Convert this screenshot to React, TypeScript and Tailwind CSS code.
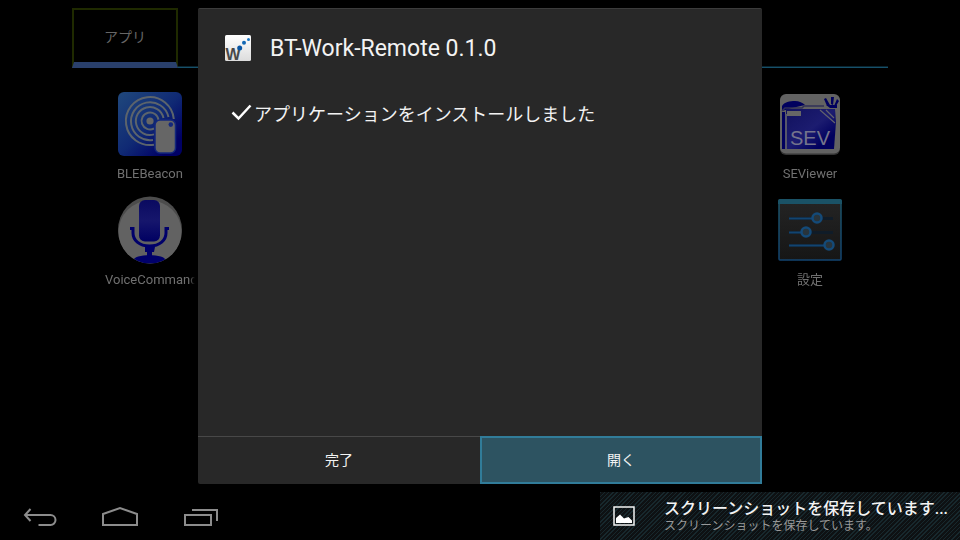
import React from 'react';

interface LauncherApp {
    label: string;
    icon: React.ReactNode;
}

const BeaconIcon = () => (
    <svg className="w-16 h-16" viewBox="0 0 64 64" fill="none" aria-hidden="true">
        <defs>
            <linearGradient id="beacon-bg" x1="0" y1="0" x2="1" y2="1">
                <stop offset="0" stopColor="#20487c" />
                <stop offset="0.5" stopColor="#102a74" />
                <stop offset="0.85" stopColor="#000064" />
            </linearGradient>
        </defs>
        <rect width="64" height="64" rx="6" fill="url(#beacon-bg)" />
        <circle cx="32" cy="29" r="3.6" fill="#666" />
        <g stroke="#5c646c" strokeWidth="2">
            <path d="M36 36.500A8.500 8.500 0 1 1 40.500 28" />
            <path d="M36 42.400A14 14 0 1 1 45.500 26" />
            <path d="M35 48A19 19 0 1 1 50.500 25" />
            <path d="M36 52.700A24 24 0 1 1 55.800 27" />
        </g>
        <rect x="37" y="28" width="20.500" height="33" rx="5" fill="#666" stroke="#14287c" strokeWidth="1.500" />
        <circle cx="52.800" cy="32.600" r="2.300" fill="#14287c" />
    </svg>
);

const MicIcon = () => (
    <svg className="w-16 h-[68px] shrink-0" viewBox="0 0 64 68" fill="none" aria-hidden="true">
        <defs>
            <clipPath id="mic-clip">
                <ellipse cx="32" cy="34" rx="32" ry="33.500" />
            </clipPath>
            <linearGradient id="mic-body" x1="0" y1="0" x2="0" y2="1">
                <stop offset="0" stopColor="#0a0a60" />
                <stop offset="0.5" stopColor="#16166c" />
                <stop offset="1" stopColor="#000062" />
            </linearGradient>
        </defs>
        <ellipse cx="32" cy="34" rx="32" ry="33.500" fill="#4c4c4c" />
        <ellipse cx="32" cy="36" rx="31.500" ry="31.500" fill="#626262" />
        <g clipPath="url(#mic-clip)">
            <rect x="21" y="4" width="21" height="41.500" rx="6" fill="url(#mic-body)" />
            <path d="M12 32.500H15V37C15 44 21 50 31.500 50S48 44 48 37V32.500H51" stroke="#00006a" strokeWidth="3" />
            <path d="M27 51H37L36 56H34V60H29V56H27Z" fill="#00006a" />
            <ellipse cx="31.500" cy="64.500" rx="16" ry="5.500" fill="#00006a" />
        </g>
    </svg>
);

const ViewerIcon = () => (
    <svg className="w-16 h-16" viewBox="0 0 64 64" fill="none" aria-hidden="true">
        <defs>
            <linearGradient id="viewer-folder" x1="0" y1="0" x2="1" y2="1">
                <stop offset="0" stopColor="#11115e" />
                <stop offset="0.5" stopColor="#1c1c70" />
                <stop offset="0.8" stopColor="#00005e" />
            </linearGradient>
        </defs>
        <rect x="2" y="3" width="60" height="60" rx="6" fill="#343434" />
        <rect x="2" y="2" width="60" height="59.500" rx="6" fill="#626262" />
        <path d="M4 14C6 10 12 9 17 9C21 9 25 11 27 13L14 16L4 19Z" fill="#00005e" />
        <path d="M4 19L7 16H24L26 14H46" stroke="#303058" strokeWidth="1.500" />
        <path d="M4 20H7V57H4Z" fill="#00005e" />
        <path d="M8 17H57L58 30L56 57H8Z" fill="url(#viewer-folder)" />
        <path d="M8 57V22" stroke="#56566a" strokeWidth="2" />
        <path d="M9 19H23V24H9Z" fill="#666" />
        <path d="M42 18L57 31M48 18L56 26" stroke="#62626c" strokeWidth="1.200" />
        <path d="M49 14L46 7L48 6L52 13ZM53 12V5H56L55 13ZM56 14L59 7L61 9L58 14ZM48 13H59V16H52Z" fill="#00005e" />
        <text x="12" y="53" fontFamily="Liberation Sans" fontSize="20" fill="#74748c">SEV</text>
    </svg>
);

const SettingsIcon = () => (
    <svg className="w-16 h-16" viewBox="0 0 64 64" fill="none" aria-hidden="true">
        <defs>
            <linearGradient id="settings-bg" x1="0" y1="0" x2="0" y2="1">
                <stop offset="0" stopColor="#242424" />
                <stop offset="1" stopColor="#161616" />
            </linearGradient>
            <linearGradient id="settings-edge" x1="0" y1="0" x2="0" y2="1">
                <stop offset="0" stopColor="#1c5468" />
                <stop offset="1" stopColor="#124470" />
            </linearGradient>
        </defs>
        <rect x="1" y="2" width="62" height="60" rx="1" fill="url(#settings-bg)" stroke="url(#settings-edge)" strokeWidth="1.500" />
        <path d="M0 3Q0 1 2 1H62Q64 1 64 3V6H0Z" fill="#1a5266" />
        <path d="M11 20.500H55M11 34.500H55M11 47.500H55" stroke="#101c28" strokeWidth="3" />
        <path d="M11 20.500H35M11 34.500H24M11 47.500H48" stroke="#124470" strokeWidth="2" />
        <g fill="#28343c" stroke="#144a78" strokeWidth="2.500">
            <circle cx="39" cy="20" r="4.500" />
            <circle cx="28" cy="34" r="4.500" />
            <circle cx="51" cy="47" r="4.500" />
        </g>
    </svg>
);

const PackageIcon = () => (
    <svg className="w-7 h-7" viewBox="0 0 28 28" aria-hidden="true">
        <defs>
            <linearGradient id="package-bg" x1="0" y1="0" x2="0" y2="1">
                <stop offset="0" stopColor="#fff" />
                <stop offset="1" stopColor="#dcdcdc" />
            </linearGradient>
        </defs>
        <rect x="1" y="0" width="26" height="26" rx="1.500" fill="url(#package-bg)" />
        <text x="1.500" y="25" fontFamily="Liberation Sans" fontWeight="700" fontSize="16" fill="#484848">W</text>
        <circle cx="15.700" cy="13" r="2.500" fill="#0a56a4" />
        <circle cx="20" cy="7.700" r="2" fill="#1468b4" />
        <circle cx="24.500" cy="4.400" r="1.500" fill="#1e78c4" />
    </svg>
);

const leftApps: LauncherApp[] = [
    { label: 'BLEBeacon', icon: <BeaconIcon /> },
    { label: 'VoiceCommand', icon: <MicIcon /> },
];

const rightApps: LauncherApp[] = [
    { label: 'SEViewer', icon: <ViewerIcon /> },
    { label: '設定', icon: <SettingsIcon /> },
];

const AppColumn = ({ apps }: { apps: LauncherApp[] }) => (
    <div className="flex flex-col gap-3.5">
        {apps.map(app => (
            <button key={app.label} type="button" className="w-[90px] flex flex-col items-center gap-2">
                <span className="h-16 flex items-center">{app.icon}</span>
                {/* long names fade out at the edge of the cell */}
                <span className="w-full h-5 leading-5 whitespace-nowrap text-[13px] text-[#707070] mask-r-from-94% mask-r-to-100%">
                    {app.label}
                </span>
            </button>
        ))}
    </div>
);

const Launcher = () => (
    <div className="pt-2">
        <div className="mx-[72px] flex border-b border-[#16506a] shadow-[inset_0_-1px_#0a2530]">
            <button type="button" className="w-[106px] h-[60px] -mb-px pt-0.5 border-2 border-b-6 border-[#1f2a00] border-b-[#2a406c] text-sm text-[#666]">
                アプリ
            </button>
        </div>
        <div className="mx-[105px] mt-6 flex justify-between">
            <AppColumn apps={leftApps} />
            <AppColumn apps={rightApps} />
        </div>
    </div>
);

const InstallDialog = () => (
    <div role="dialog" aria-labelledby="dialog-title" className="w-full max-w-[564px] flex flex-col rounded-xs bg-[#282828] border-t border-[#3c3c3c] text-[#f3f3f3]">
        <div className="flex items-start gap-[18px] px-[26px] pt-[26px]">
            <PackageIcon />
            <h1 id="dialog-title" className="text-[23px] leading-7">BT-Work-Remote 0.1.0</h1>
        </div>
        <div className="flex-1 flex items-start px-8 pt-[38px]">
            <svg className="w-6 h-7" viewBox="0 0 24 28" fill="none" aria-hidden="true">
                <path d="M2.500 11.500L8.500 17.500L20.500 4.500" stroke="#fff" strokeWidth="2.500" />
            </svg>
            <p className="text-lg leading-7">アプリケーションをインストールしました</p>
        </div>
        <div className="grid grid-cols-2 h-12 text-sm">
            <button type="button" className="border-y border-t-[#484848] border-b-transparent">完了</button>
            <button type="button" className="border-2 border-[#317c99] bg-[#2d5361]">開く</button>
        </div>
    </div>
);

const NavBar = () => (
    <nav className="flex text-[#8c8c8c]">
        <button type="button" aria-label="戻る" className="w-20 flex items-center justify-center">
            <svg className="w-9 h-6" viewBox="0 0 36 24" fill="none" stroke="currentColor" strokeWidth="2" aria-hidden="true">
                <path d="M8.500 5L3 11L8.500 17M3 11H28.500A5 5 0 0 1 28.500 21H16.500" />
            </svg>
        </button>
        <button type="button" aria-label="ホーム" className="w-20 flex items-center justify-center">
            <svg className="w-9 h-6" viewBox="0 0 36 24" fill="none" stroke="currentColor" strokeWidth="2" aria-hidden="true">
                <path d="M1 21V10L18 4L35 10V21Z" />
            </svg>
        </button>
        <button type="button" aria-label="最近使ったアプリ" className="w-20 flex items-center justify-center">
            <svg className="w-9 h-6" viewBox="0 0 36 24" fill="none" stroke="currentColor" strokeWidth="2" aria-hidden="true">
                <path d="M3 11H29V21H3ZM10 6H35V17" />
            </svg>
        </button>
    </nav>
);

const SavingNotice = () => (
    <div
        role="status"
        className="w-[360px] pt-0.5 flex items-center gap-4 overflow-hidden bg-[repeating-linear-gradient(135deg,#17282d_0px,#17282d_1px,#0e1113_1px,#0e1113_3px)]"
    >
        <div className="w-12 shrink-0 flex justify-center">
            <svg className="w-6 h-6" viewBox="0 0 24 24" fill="none" aria-hidden="true">
                <rect x="2" y="2" width="20" height="18" stroke="#f3f3f3" strokeWidth="1.500" />
                <path d="M4 18V13L8 9.500L12 13.500L16.500 12L20 15.500V18Z" fill="#fff" />
            </svg>
        </div>
        <div className="whitespace-nowrap">
            <p className="text-base leading-[18px] font-medium text-[#f3f3f3]">スクリーンショットを保存しています...</p>
            <p className="text-xs leading-4 text-[#999]">スクリーンショットを保存しています。</p>
        </div>
    </div>
);

const App: React.FC = () => {
    return (
        <div className="min-h-screen flex flex-col bg-black font-[Roboto,'Noto_Sans_CJK_JP',sans-serif]">
            <main className="relative flex-1">
                <Launcher />
                <div className="absolute inset-0 py-2 flex justify-center">
                    <InstallDialog />
                </div>
            </main>
            <footer className="h-12 flex justify-between">
                <NavBar />
                <SavingNotice />
            </footer>
        </div>
    );
};

export default App;
